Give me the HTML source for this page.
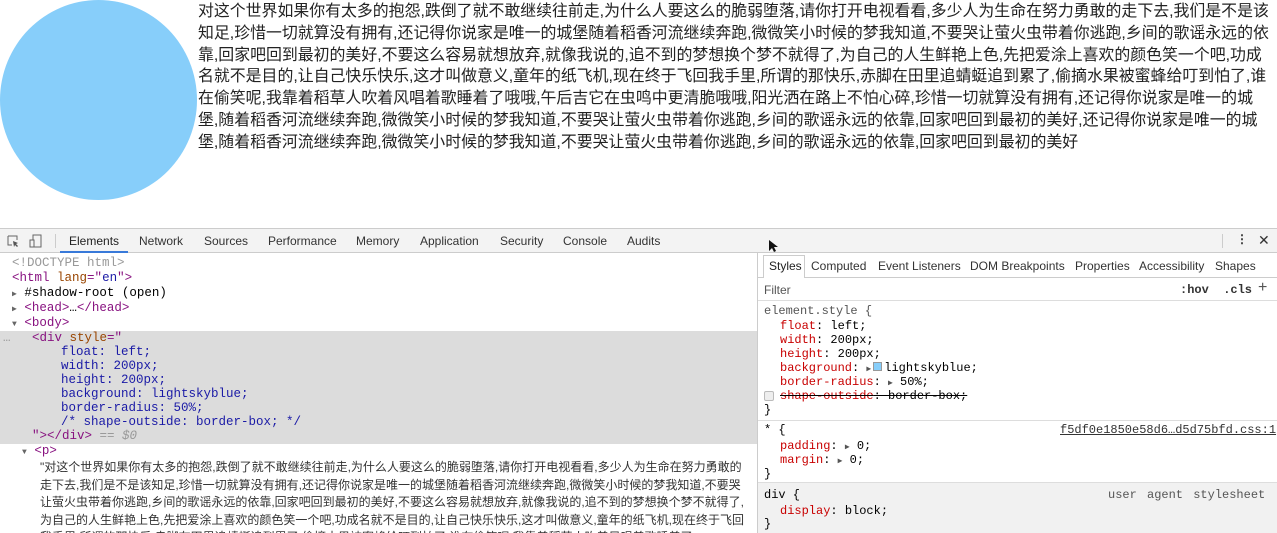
<!DOCTYPE html>
<html><head><meta charset="utf-8"><style>
*{margin:0;padding:0;box-sizing:border-box}
body{width:1277px;height:533px;overflow:hidden;background:#fff;font-family:"Liberation Sans","Noto Sans CJK SC",sans-serif;position:relative}
.circle{position:absolute;left:0;top:0;width:197px;height:200px;border-radius:50%;background:lightskyblue}
.txt{position:absolute;left:198px;top:1px;font-size:15.9px;line-height:21.8px;color:#222;white-space:nowrap}
.dev{position:absolute;left:0;top:228px;width:1277px;height:305px;border-top:1px solid #ccc;background:#fff;overflow:hidden}
.tb{position:absolute;left:0;top:0;width:1277px;height:24px;background:#f3f3f3;border-bottom:1px solid #ccc;font-size:12px;color:#333}
.tb span{position:absolute;top:5px}
.mono{font-family:"Liberation Mono","DejaVu Sans Mono",monospace;font-size:12.5px}
.el{position:absolute;left:0;top:24px;width:757px;height:281px;overflow:hidden}
.ln{position:absolute;white-space:nowrap;line-height:15px}
.tag{color:#881280}.at{color:#994500}.av{color:#1a1aa6}.gr{color:#999}
.sel{position:absolute;left:0;top:78px;width:757px;height:113px;background:#dcdcdc}
.sp{position:absolute;left:757px;top:24px;width:520px;height:281px;border-left:1px solid #ccc;overflow:hidden}
.pn{color:#c80000}
.cn{font-family:"Liberation Sans","Noto Sans CJK SC",sans-serif;font-size:12px;color:#333}
</style></head><body>
<div class="circle"></div>
<div class="txt">对这个世界如果你有太多的抱怨,跌倒了就不敢继续往前走,为什么人要这么的脆弱堕落,请你打开电视看看,多少人为生命在努力勇敢的走下去,我们是不是该<br>知足,珍惜一切就算没有拥有,还记得你说家是唯一的城堡随着稻香河流继续奔跑,微微笑小时候的梦我知道,不要哭让萤火虫带着你逃跑,乡间的歌谣永远的依<br>靠,回家吧回到最初的美好,不要这么容易就想放弃,就像我说的,追不到的梦想换个梦不就得了,为自己的人生鲜艳上色,先把爱涂上喜欢的颜色笑一个吧,功成<br>名就不是目的,让自己快乐快乐,这才叫做意义,童年的纸飞机,现在终于飞回我手里,所谓的那快乐,赤脚在田里追蜻蜓追到累了,偷摘水果被蜜蜂给叮到怕了,谁<br>在偷笑呢,我靠着稻草人吹着风唱着歌睡着了哦哦,午后吉它在虫鸣中更清脆哦哦,阳光洒在路上不怕心碎,珍惜一切就算没有拥有,还记得你说家是唯一的城<br>堡,随着稻香河流继续奔跑,微微笑小时候的梦我知道,不要哭让萤火虫带着你逃跑,乡间的歌谣永远的依靠,回家吧回到最初的美好,还记得你说家是唯一的城<br>堡,随着稻香河流继续奔跑,微微笑小时候的梦我知道,不要哭让萤火虫带着你逃跑,乡间的歌谣永远的依靠,回家吧回到最初的美好</div>
<div class="dev">
 <div class="tb">
  <svg style="position:absolute;left:7px;top:6px" width="12" height="12"><path d="M1 1h9v4M1 1v9h4" stroke="#666" fill="none"/><path d="M6 6l5 2-2 1 2 2-1 1-2-2-1 2z" fill="#555"/></svg>
  <svg style="position:absolute;left:29px;top:5px" width="14" height="14"><rect x="4" y="1" width="8" height="12" fill="none" stroke="#666"/><rect x="1" y="6" width="4" height="7" fill="#f3f3f3" stroke="#666"/></svg>
  <div style="position:absolute;left:55px;top:5px;width:1px;height:14px;background:#ccc"></div>
  <span style="left:69px;color:#222">Elements</span>
  <div style="position:absolute;left:60px;top:22px;width:68px;height:2px;background:#3879d9"></div>
  <span style="left:139px">Network</span><span style="left:204px">Sources</span><span style="left:268px">Performance</span><span style="left:356px">Memory</span><span style="left:420px">Application</span><span style="left:500px">Security</span><span style="left:563px">Console</span><span style="left:627px">Audits</span>
  <svg style="position:absolute;left:768px;top:10px" width="10" height="14"><path d="M1 1v11l3-3 2 4 2-1-2-4h4z" fill="#111"/></svg>
  <div style="position:absolute;left:1222px;top:5px;width:1px;height:14px;background:#ccc"></div>
  <span style="left:1236px;font-weight:bold;top:3px">⋮</span>
  <span style="left:1258px;top:3px;font-size:14px">✕</span>
 </div>
 <div class="el mono">
  <div class="sel"></div>
  <div class="ln gr" style="left:12px;top:3px">&lt;!DOCTYPE html&gt;</div>
  <div class="ln" style="left:12px;top:18px"><span class="tag">&lt;html</span> <span class="at">lang</span><span class="tag">="</span><span class="av">en</span><span class="tag">"&gt;</span></div>
  <div class="ln" style="left:12px;top:33px"><span style="font-size:8px;color:#666">▶</span> #shadow-root (open)</div>
  <div class="ln" style="left:12px;top:48px"><span style="font-size:8px;color:#666">▶</span> <span class="tag">&lt;head&gt;</span>…<span class="tag">&lt;/head&gt;</span></div>
  <div class="ln" style="left:12px;top:63px"><span style="font-size:8px;color:#666">▼</span> <span class="tag">&lt;body&gt;</span></div>
  <div class="ln gr" style="left:3px;top:78px">…</div>
  <div class="ln" style="left:32px;top:78px"><span class="tag">&lt;div</span> <span class="at">style</span><span class="tag">="</span></div>
  <div class="ln av" style="left:61px;top:92px">float: left;</div>
  <div class="ln av" style="left:61px;top:106px">width: 200px;</div>
  <div class="ln av" style="left:61px;top:120px">height: 200px;</div>
  <div class="ln av" style="left:61px;top:134px">background: lightskyblue;</div>
  <div class="ln av" style="left:61px;top:148px">border-radius: 50%;</div>
  <div class="ln av" style="left:61px;top:162px">/* shape-outside: border-box; */</div>
  <div class="ln" style="left:32px;top:176px"><span class="tag">"&gt;&lt;/div&gt;</span> <span class="gr">== <i>$0</i></span></div>
  <div class="ln" style="left:22px;top:191px"><span style="font-size:8px;color:#666">▼</span> <span class="tag">&lt;p&gt;</span></div>
  <div class="cn" style="position:absolute;left:40px;top:206px;width:712px;line-height:17.5px">"对这个世界如果你有太多的抱怨,跌倒了就不敢继续往前走,为什么人要这么的脆弱堕落,请你打开电视看看,多少人为生命在努力勇敢的走下去,我们是不是该知足,珍惜一切就算没有拥有,还记得你说家是唯一的城堡随着稻香河流继续奔跑,微微笑小时候的梦我知道,不要哭让萤火虫带着你逃跑,乡间的歌谣永远的依靠,回家吧回到最初的美好,不要这么容易就想放弃,就像我说的,追不到的梦想换个梦不就得了,为自己的人生鲜艳上色,先把爱涂上喜欢的颜色笑一个吧,功成名就不是目的,让自己快乐快乐,这才叫做意义,童年的纸飞机,现在终于飞回我手里,所谓的那快乐,赤脚在田里追蜻蜓追到累了,偷摘水果被蜜蜂给叮到怕了,谁在偷笑呢,我靠着稻草人吹着风唱着歌睡着了</div>
 </div>
 <div class="sp">
  <div style="position:absolute;left:0;top:0;width:520px;height:25px;border-bottom:1px solid #ccc;font-size:12px;color:#333">
   <div style="position:absolute;left:5px;top:2px;width:42px;height:23px;background:#fff;border:1px solid #ccc;border-bottom:none"></div>
   <span style="position:absolute;left:11px;top:6px;color:#222">Styles</span>
   <span style="position:absolute;left:53px;top:6px">Computed</span>
   <span style="position:absolute;left:120px;top:6px">Event Listeners</span>
   <span style="position:absolute;left:212px;top:6px">DOM Breakpoints</span>
   <span style="position:absolute;left:317px;top:6px">Properties</span>
   <span style="position:absolute;left:381px;top:6px">Accessibility</span>
   <span style="position:absolute;left:457px;top:6px">Shapes</span>
  </div>
  <div style="position:absolute;left:0;top:26px;width:520px;height:22px;border-bottom:1px solid #ddd;font-size:12px;color:#555">
   <span style="position:absolute;left:6px;top:4px">Filter</span>
   <span class="mono" style="position:absolute;left:422px;top:4px;font-weight:bold;color:#333;font-size:12px">:hov &nbsp;.cls</span>
   <span style="position:absolute;left:500px;top:0px;font-size:16px">+</span>
  </div>
  <div class="mono" style="position:absolute;left:0;top:22px;width:520px;height:260px;font-size:12px">
   <div class="ln" style="left:6px;top:29px;position:absolute;color:#555">element.style {</div>
   <div class="ln" style="left:22px;top:44px"><span class="pn">float</span>: left;</div>
   <div class="ln" style="left:22px;top:58px"><span class="pn">width</span>: 200px;</div>
   <div class="ln" style="left:22px;top:72px"><span class="pn">height</span>: 200px;</div>
   <div class="ln" style="left:22px;top:86px"><span class="pn">background</span>: <span style="font-size:8px;color:#555">▶</span><span style="display:inline-block;width:9px;height:9px;background:lightskyblue;border:1px solid #999;margin:0 2px"></span>lightskyblue;</div>
   <div class="ln" style="left:22px;top:100px"><span class="pn">border-radius</span>: <span style="font-size:8px;color:#555">▶</span> 50%;</div>
   <div style="position:absolute;left:6px;top:116px;width:10px;height:10px;border:1px solid #bbb;background:#eee;border-radius:2px"></div>
   <div class="ln" style="left:22px;top:114px;text-decoration:line-through"><span class="pn">shape-outside</span>: border-box;</div>
   <div class="ln" style="left:6px;top:128px">}</div>
   <div style="position:absolute;left:0;top:145px;width:520px;height:1px;background:#ddd"></div>
   <div class="ln" style="left:6px;top:148px">* {</div>
   <div class="ln" style="left:302px;top:148px;text-decoration:underline;color:#333">f5df0e1850e58d6…d5d75bfd.css:1</div>
   <div class="ln" style="left:22px;top:164px"><span class="pn">padding</span>: <span style="font-size:8px;color:#555">▶</span> 0;</div>
   <div class="ln" style="left:22px;top:178px"><span class="pn">margin</span>: <span style="font-size:8px;color:#555">▶</span> 0;</div>
   <div class="ln" style="left:6px;top:192px">}</div>
   <div style="position:absolute;left:0;top:207px;width:520px;height:80px;background:#f1f1f1;border-top:1px solid #ddd"></div>
   <div class="ln" style="left:6px;top:213px">div {</div>
   <div class="ln" style="left:350px;top:213px;color:#555;word-spacing:3px">user agent stylesheet</div>
   <div class="ln" style="left:22px;top:229px"><span class="pn">display</span>: block;</div>
   <div class="ln" style="left:6px;top:242px">}</div>
  </div>
 </div>
</div>
</body></html>
